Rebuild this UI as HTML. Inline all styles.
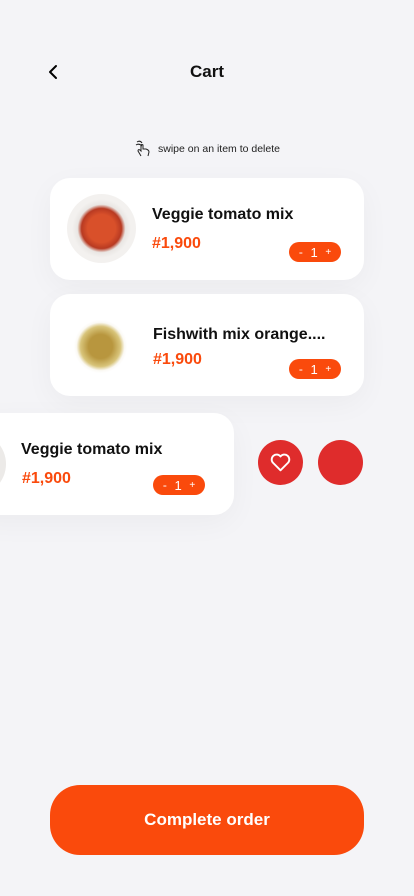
<!DOCTYPE html>
<html><head><meta charset="utf-8"><style>
*{margin:0;padding:0;box-sizing:border-box}
body{width:414px;height:896px;background:#f4f4f7;font-family:"Liberation Sans",sans-serif;position:relative;overflow:hidden}
.a{position:absolute}
.card{position:absolute;background:#fff;border-radius:20px;box-shadow:0 8px 30px rgba(0,0,0,0.04)}
.name{position:absolute;font-size:16px;font-weight:bold;color:#111}
.price{position:absolute;font-size:16px;font-weight:bold;color:#fa4a0c}
.pill{position:absolute;width:52px;height:20px;border-radius:10px;background:#fa4a0c;color:#fff;font-size:12px;display:flex;align-items:center;justify-content:space-around;padding:0 6px}
.plate{position:absolute;border-radius:50%}
</style></head><body>
<svg class="a" style="left:46px;top:64px" width="14" height="16" viewBox="0 0 14 16"><path d="M10 2 L4 8 L10 14" stroke="#000" stroke-width="2" fill="none" stroke-linecap="round" stroke-linejoin="round"/></svg>
<div class="a" style="left:0;width:414px;top:62px;text-align:center;font-size:17px;font-weight:bold;color:#111">Cart</div>
<svg class="a" style="left:133px;top:139px" width="20" height="20" viewBox="0 0 20 20" fill="none" stroke="#222" stroke-width="1"><path d="M4 3 Q7 1 9 4 M3 6 Q6 4 9 7"/><path d="M8 17 L5 12 Q5 10 7 11 L8 12 L8 6 Q9 5 10 6 L10 10 L13 10 Q16 11 16 13 L15 17"/></svg>
<div class="a" style="left:158px;top:143px;font-size:10.5px;color:#222">swipe on an item to delete</div>

<div class="card" style="left:50px;top:178px;width:314px;height:102px"></div>
<div class="plate" style="left:67px;top:194px;width:69px;height:69px;background:radial-gradient(circle,#d9502a 0 14px,#b83a22 20px,#e9e6e3 24px,#f3f1ef 60%)"></div>
<div class="name" style="left:152px;top:206px">Veggie tomato mix</div>
<div class="price" style="left:152px;top:235px">#1,900</div>
<div class="pill" style="left:289px;top:242px"><span>-</span><span style="font-size:13px">1</span><span style="font-size:10px">+</span></div>

<div class="card" style="left:50px;top:294px;width:314px;height:102px"></div>
<div class="plate" style="left:69px;top:315px;width:63px;height:63px;background:radial-gradient(circle,#b8963e 0 12px,#d8c47a 20px,#fbf9f4 24px,#fff 60%)"></div>
<div class="name" style="left:153px;top:326px">Fishwith mix orange....</div>
<div class="price" style="left:153px;top:351px">#1,900</div>
<div class="pill" style="left:289px;top:359px"><span>-</span><span style="font-size:13px">1</span><span style="font-size:10px">+</span></div>

<div class="card" style="left:-30px;top:413px;width:264px;height:102px"></div>
<div class="plate" style="left:-30px;top:432px;width:36px;height:64px;border-radius:0 32px 32px 0;background:#eceae8"></div>
<div class="name" style="left:21px;top:441px">Veggie tomato mix</div>
<div class="price" style="left:22px;top:470px">#1,900</div>
<div class="pill" style="left:153px;top:475px"><span>-</span><span style="font-size:13px">1</span><span style="font-size:10px">+</span></div>

<div class="a" style="left:258px;top:440px;width:45px;height:45px;border-radius:50%;background:#df2c2c"></div>
<svg class="a" style="left:270px;top:453px" width="21" height="19" viewBox="0 0 24 22"><path d="M12 20 L3 11 A5 5 0 0 1 12 4 A5 5 0 0 1 21 11 Z" fill="none" stroke="#fff" stroke-width="2.2" stroke-linejoin="round"/></svg>
<div class="a" style="left:318px;top:440px;width:45px;height:45px;border-radius:50%;background:#df2c2c"></div>

<div class="a" style="left:50px;top:785px;width:314px;height:70px;border-radius:30px;background:#fa4a0c;color:#fff;font-size:17px;font-weight:bold;display:flex;align-items:center;justify-content:center">Complete order</div>
</body></html>
